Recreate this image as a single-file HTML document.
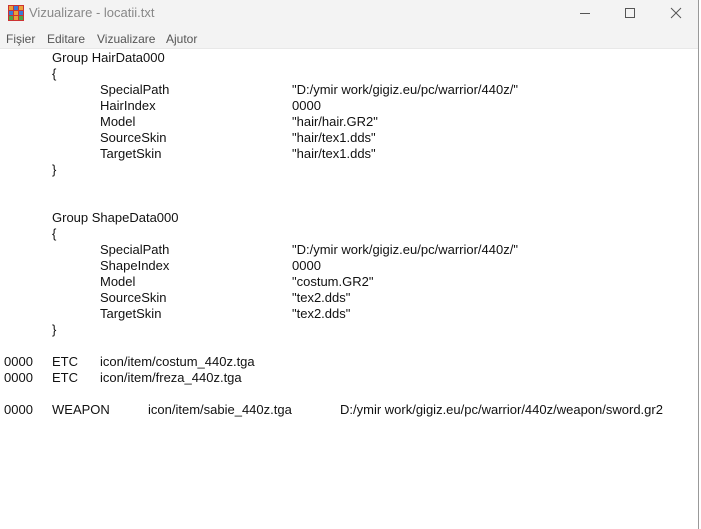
<!DOCTYPE html>
<html><head><meta charset="utf-8"><style>
body{margin:0;width:701px;height:529px;overflow:hidden;background:#fff;font-family:"Liberation Sans",sans-serif;position:relative}
.top{position:absolute;left:0;top:0;width:698px;height:48px;background:#f3f3f3}
.title{position:absolute;left:29px;top:5px;font-size:13px;color:#888}
.menu{position:absolute;top:32px;font-size:12px;color:#555}
.edge{position:absolute;left:698px;top:0;width:3px;height:529px;background:#fff;border-left:1px solid #999}
.l{position:absolute;font-size:13px;color:#111;white-space:pre;line-height:16px}
</style></head><body>
<div class="top"></div>
<svg style="position:absolute;left:8px;top:5px" width="16" height="16" viewBox="0 0 16 16">
<rect x="0" y="0" width="16" height="16" fill="#c33"/>
<rect x="1" y="1" width="4" height="4" fill="#e9a23b"/><rect x="6" y="1" width="4" height="4" fill="#3a7ad8"/><rect x="11" y="1" width="4" height="4" fill="#e9a23b"/>
<rect x="1" y="6" width="4" height="4" fill="#3a7ad8"/><rect x="6" y="6" width="4" height="4" fill="#e9a23b"/><rect x="11" y="6" width="4" height="4" fill="#3a7ad8"/>
<rect x="1" y="11" width="4" height="4" fill="#4aa84a"/><rect x="6" y="11" width="4" height="4" fill="#e9a23b"/><rect x="11" y="11" width="4" height="4" fill="#4aa84a"/>
</svg>
<div class="title">Vizualizare - locatii.txt</div>
<svg style="position:absolute;left:560px;top:0" width="138" height="28">
<line x1="20" y1="13.5" x2="30" y2="13.5" stroke="#555" stroke-width="1"/>
<rect x="65.5" y="8.5" width="9" height="9" fill="none" stroke="#555"/>
<line x1="111" y1="8" x2="121" y2="18" stroke="#555"/><line x1="121" y1="8" x2="111" y2="18" stroke="#555"/>
</svg>
<div class="menu" style="left:6px">Fişier</div>
<div class="menu" style="left:47px">Editare</div>
<div class="menu" style="left:97px">Vizualizare</div>
<div class="menu" style="left:166px">Ajutor</div>
<div style="position:absolute;left:0;top:48px;width:698px;height:1px;background:#e8e8e8"></div>
<div class="edge"></div>

<div class="l" style="left:52px;top:50px">Group HairData000</div>
<div class="l" style="left:52px;top:66px">{</div>
<div class="l" style="left:100px;top:82px">SpecialPath</div><div class="l" style="left:292px;top:82px">"D:/ymir work/gigiz.eu/pc/warrior/440z/"</div>
<div class="l" style="left:100px;top:98px">HairIndex</div><div class="l" style="left:292px;top:98px">0000</div>
<div class="l" style="left:100px;top:114px">Model</div><div class="l" style="left:292px;top:114px">"hair/hair.GR2"</div>
<div class="l" style="left:100px;top:130px">SourceSkin</div><div class="l" style="left:292px;top:130px">"hair/tex1.dds"</div>
<div class="l" style="left:100px;top:146px">TargetSkin</div><div class="l" style="left:292px;top:146px">"hair/tex1.dds"</div>
<div class="l" style="left:52px;top:162px">}</div>

<div class="l" style="left:52px;top:210px">Group ShapeData000</div>
<div class="l" style="left:52px;top:226px">{</div>
<div class="l" style="left:100px;top:242px">SpecialPath</div><div class="l" style="left:292px;top:242px">"D:/ymir work/gigiz.eu/pc/warrior/440z/"</div>
<div class="l" style="left:100px;top:258px">ShapeIndex</div><div class="l" style="left:292px;top:258px">0000</div>
<div class="l" style="left:100px;top:274px">Model</div><div class="l" style="left:292px;top:274px">"costum.GR2"</div>
<div class="l" style="left:100px;top:290px">SourceSkin</div><div class="l" style="left:292px;top:290px">"tex2.dds"</div>
<div class="l" style="left:100px;top:306px">TargetSkin</div><div class="l" style="left:292px;top:306px">"tex2.dds"</div>
<div class="l" style="left:52px;top:322px">}</div>

<div class="l" style="left:4px;top:354px">0000</div><div class="l" style="left:52px;top:354px">ETC</div><div class="l" style="left:100px;top:354px">icon/item/costum_440z.tga</div>
<div class="l" style="left:4px;top:370px">0000</div><div class="l" style="left:52px;top:370px">ETC</div><div class="l" style="left:100px;top:370px">icon/item/freza_440z.tga</div>
<div class="l" style="left:4px;top:402px">0000</div><div class="l" style="left:52px;top:402px">WEAPON</div><div class="l" style="left:148px;top:402px">icon/item/sabie_440z.tga</div><div class="l" style="left:340px;top:402px">D:/ymir work/gigiz.eu/pc/warrior/440z/weapon/sword.gr2</div>
</body></html>
